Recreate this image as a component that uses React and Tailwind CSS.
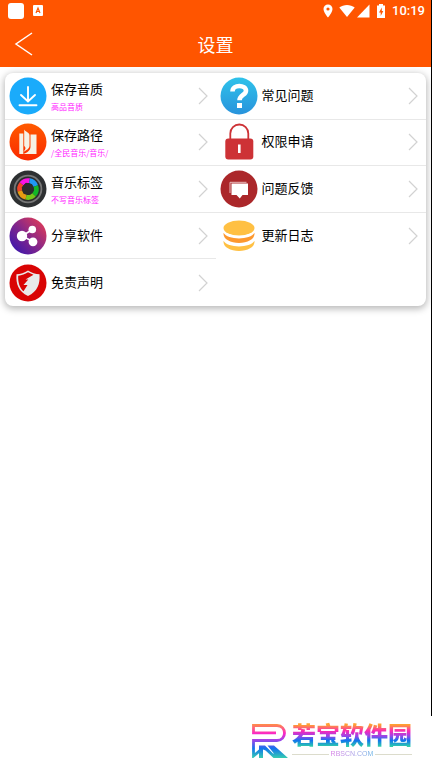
import React from 'react';

const DownloadIcon = () => (
  <svg viewBox="0 0 38 38" className="h-[38px] w-[38px] shrink-0" aria-hidden="true">
    <circle cx="19" cy="19" r="18.5" fill="#1aabfb" />
    <path d="M19 10v14M12 18l7 6.5 7-6.5M10.5 28.2h17" fill="none" stroke="#fff" strokeWidth="1.9" strokeLinecap="round" />
  </svg>
);

const PathIcon = () => (
  <svg viewBox="0 0 38 38" className="h-[38px] w-[38px] shrink-0" aria-hidden="true">
    <defs>
      <linearGradient id="pathFill" x1="0" y1="0" x2="0" y2="1">
        <stop offset="0" stopColor="#ff5a00" />
        <stop offset="1" stopColor="#fa2a00" />
      </linearGradient>
    </defs>
    <circle cx="19" cy="19" r="18.5" fill="url(#pathFill)" />
    <path d="M10.3 10.5h4V31h-4z" fill="#f6f2e6" />
    <path d="M21.5 11.5h6V31H14c5-1.500 7.500-4 7.500-7.500z" fill="#f6f2e6" />
    <path d="M15.200 6.500c1 2.500 5.300 2.500 5.300 6v10c0 3-2.500 4.500-6.200 6.500 2.700-3 2.700-4.500.9-6z" fill="#f6f2e6" />
  </svg>
);

const LensIcon = () => (
  <svg viewBox="0 0 38 38" className="h-[38px] w-[38px] shrink-0" aria-hidden="true">
    <circle cx="19" cy="19" r="18.5" fill="#2e3032" />
    <circle cx="19" cy="19" r="13.4" fill="#2c2c2d" stroke="#777" strokeWidth="1.8" />
    <g fill="none" strokeWidth="4.8">
      <path d="M10.8 21A8.4 8.4 0 0 1 12.5 13.7" stroke="#f0452a" />
      <path d="M12.5 13.7A8.4 8.4 0 0 1 20.5 10.7" stroke="#fb12e4" />
      <path d="M20.5 10.7A8.4 8.4 0 0 1 26.8 16" stroke="#2097f4" />
      <path d="M26.8 16A8.4 8.4 0 0 1 25 24.9" stroke="#12b627" />
      <path d="M25 24.9A8.4 8.4 0 0 1 17 27.2" stroke="#74c51a" />
      <path d="M17 27.2A8.4 8.4 0 0 1 10.8 21" stroke="#e59a12" />
    </g>
    <path d="M17 12.8l6 1.4 2 6-4.500 4.600-6-1.300-1.800-6z" fill="#2c2c2d" />
  </svg>
);

const ShareIcon = () => (
  <svg viewBox="0 0 38 38" className="h-[38px] w-[38px] shrink-0" aria-hidden="true">
    <defs>
      <linearGradient id="shareFill" x1="0.1" y1="0.9" x2="0.9" y2="0.15">
        <stop offset="0" stopColor="#3d17ad" />
        <stop offset="0.5" stopColor="#84268a" />
        <stop offset="1" stopColor="#d83a5c" />
      </linearGradient>
    </defs>
    <circle cx="19" cy="19" r="18.5" fill="url(#shareFill)" />
    <path d="M23.5 12.5L13 19l11 5.5" fill="none" stroke="#fff" strokeWidth="1.6" />
    <circle cx="13" cy="19" r="5.2" fill="#fff" />
    <circle cx="23.3" cy="12.5" r="3.8" fill="#fff" />
    <circle cx="24" cy="24.8" r="4.4" fill="#fff" />
  </svg>
);

const ShieldIcon = () => (
  <svg viewBox="0 0 38 38" className="h-[38px] w-[38px] shrink-0" aria-hidden="true">
    <circle cx="19" cy="19" r="18.5" fill="#d90404" />
    <path d="M19 6.500c3.500 2.300 7.500 3.500 11.500 3.800.8 9.500-2 17.400-11.500 21.700C9.500 27.700 6.700 19.800 7.500 10.300c4-.3 8-1.500 11.500-3.800z" fill="#e9e9e9" />
    <path d="M19 8.300c-3 1.900-6 3-9.800 3.400-.3 6.500 1.300 12 5.300 15.600l4-6.300h-4l4.800-5.500h-2.800l8-4.800z" fill="#d90404" />
  </svg>
);

const QuestionIcon = () => (
  <svg viewBox="0 0 38 38" className="h-[38px] w-[38px] shrink-0" aria-hidden="true">
    <defs>
      <linearGradient id="askFill" x1="0" y1="0" x2="0" y2="1">
        <stop offset="0" stopColor="#2fc2ea" />
        <stop offset="1" stopColor="#2893dc" />
      </linearGradient>
    </defs>
    <circle cx="19" cy="19" r="18.5" fill="url(#askFill)" />
    <path d="M12.5 14.5c0-7.500 13.500-7 13.500-.8 0 4.300-6.500 4.300-6.500 9.500" fill="none" stroke="#fff" strokeWidth="4.600" />
    <path d="M17 26h5v5h-5z" fill="#fff" />
  </svg>
);

const LockIcon = () => (
  <svg viewBox="0 0 38 38" className="h-[38px] w-[38px] shrink-0" aria-hidden="true">
    <path d="M10.3 17v-6.500a9 9 0 0 1 18 0V17" fill="none" stroke="#cd3236" strokeWidth="1.8" />
    <rect x="5.3" y="15.5" width="28" height="21" rx="3" fill="#cd3236" />
    <rect x="18" y="21.5" width="2.6" height="8.5" fill="#fff" />
  </svg>
);

const FeedbackIcon = () => (
  <svg viewBox="0 0 38 38" className="h-[38px] w-[38px] shrink-0" aria-hidden="true">
    <circle cx="19" cy="19" r="18.5" fill="#ab272a" />
    <path d="M10 23V12.3h16.5" fill="none" stroke="#e9bcbc" strokeWidth="1" />
    <path d="M11.5 13.5H28V25h-5.500l-2.700 3.500L16.500 25h-5z" fill="#fff" />
  </svg>
);

const CoinsIcon = () => (
  <svg viewBox="0 0 38 38" className="h-[38px] w-[38px] shrink-0" aria-hidden="true">
    <ellipse cx="19" cy="11" rx="15.5" ry="7.5" fill="#ffc043" />
    <path d="M3.5 15.800c4 7.500 27 7.500 31 0 1.500 13.500-32.500 13.500-31 0z" fill="#fd982e" />
    <path d="M3.5 23.800c4 7.500 27 7.500 31 0 1.500 13.500-32.500 13.500-31 0z" fill="#ffc043" />
  </svg>
);

const Chevron = () => (
  <svg viewBox="0 0 10 18" className="h-[18px] w-[10px] shrink-0" aria-hidden="true">
    <path d="M1 1l8 8-8 8" fill="none" stroke="#d2d2d2" strokeWidth="1.2" />
  </svg>
);

const leftItems = [
  { title: '保存音质', note: '高品音质', Icon: DownloadIcon },
  { title: '保存路径', note: '/全民音乐/音乐/', Icon: PathIcon },
  { title: '音乐标签', note: '不写音乐标签', Icon: LensIcon },
  { title: '分享软件', Icon: ShareIcon },
  { title: '免责声明', Icon: ShieldIcon },
];

const rightItems = [
  { title: '常见问题', Icon: QuestionIcon },
  { title: '权限申请', Icon: LockIcon },
  { title: '问题反馈', Icon: FeedbackIcon },
  { title: '更新日志', Icon: CoinsIcon },
];

const SettingRow = ({ item }) => {
  const { title, note, Icon } = item;
  return (
    <button
      type="button"
      className="flex w-full items-center gap-1 border-b border-[#e8e8e8] pr-2 pl-1 text-left last:border-b-0"
    >
      <Icon />
      {note ? (
        <span className="flex flex-1 flex-col pt-[2px]">
          <span className="text-[13px] leading-[18px] text-black">{title}</span>
          <span className="pt-[2px] text-[8px] leading-[14px] text-[#ff1cff]">{note}</span>
        </span>
      ) : (
        <span className="flex-1 pb-[2px] text-[13px] leading-[18px] text-black">{title}</span>
      )}
      <Chevron />
    </button>
  );
};

const StatusBar = () => (
  <div className="flex h-[21px] items-center justify-between pr-[6px] pl-2 text-white">
    <div className="flex items-center gap-[9px]">
      <span className="h-4 w-4 rounded-[3px] bg-white" />
      <svg viewBox="0 0 10 11" className="h-[11px] w-[10px]" aria-hidden="true">
        <rect width="10" height="11" rx="1" fill="#fff" />
        <path d="M3 8l2-5 2 5M3.7 6.5h2.6" fill="none" stroke="#ff5500" strokeWidth="1.2" />
      </svg>
    </div>
    <div className="flex items-center">
      <svg viewBox="0 0 10 14" className="h-[14px] w-[10px]" aria-hidden="true">
        <path fillRule="evenodd" d="M5 .5a4.500 4.500 0 0 0-4.500 4.500C.5 8.400 5 13.500 5 13.500S9.500 8.400 9.500 5A4.500 4.500 0 0 0 5 .5zm0 6.100a1.600 1.600 0 1 1 0-3.200 1.600 1.600 0 0 1 0 3.200z" fill="#fff" />
      </svg>
      <svg viewBox="0 0 32 14" className="ml-[6px] h-[14px] w-8" aria-hidden="true">
        <path d="M.3 3.500C4.500 0 11.500 0 15.700 3.500L8 13z" fill="#fff" />
        <path d="M30.500.5v13H18z" fill="#fff" />
      </svg>
      <svg viewBox="0 0 10 14" className="ml-[5px] h-[14px] w-[10px]" aria-hidden="true">
        <path d="M3 0h4v1.500h2V14H1V1.500h2z" fill="#fff" />
        <path d="M5.800 3.500L3 8.500h1.700V12l2.600-5H5.800z" fill="#ff5500" />
      </svg>
      <span className="ml-[6px] font-[Roboto] text-[13px] leading-5 font-medium">10:19</span>
    </div>
  </div>
);

const Watermark = () => (
  <footer className="flex h-[50px] items-center justify-end gap-1 pr-5">
    <svg viewBox="0 0 37 34" className="h-[34px] w-[37px]" aria-hidden="true">
      <defs>
        <linearGradient id="brandFill" gradientUnits="userSpaceOnUse" x1="0" y1="0" x2="0" y2="34">
          <stop offset="0" stopColor="#ff8f45" />
          <stop offset="0.28" stopColor="#fb27c6" />
          <stop offset="0.48" stopColor="#9b45e8" />
          <stop offset="0.72" stopColor="#1274ee" />
          <stop offset="1" stopColor="#35cdb0" />
        </linearGradient>
      </defs>
      <path d="M25 8.8H2.500V1.500H26c10 0 10 15 0 15H2.500V32l7-6v-4" fill="none" stroke="url(#brandFill)" strokeWidth="2.8" />
      <path d="M8 21.500h6l8.500 8.500V34l-8-7.500-2.500-1V34H8zM16.500 21.500h6.500L37 34H22.500v-5z" fill="url(#brandFill)" />
    </svg>
    <div className="flex flex-col pb-[2px] font-['Liberation_Sans','Noto_Sans_CJK_SC',sans-serif]">
      <span className="bg-[linear-gradient(180deg,#ffa030_10%,#fb27b6_32%,#9b45e8_50%,#1274ee_66%,#30d0a8_88%)] bg-clip-text text-[24px] leading-7 font-black text-transparent">
        若宝软件园
      </span>
      <span className="flex items-center gap-[2px]">
        <span className="h-px flex-1 bg-[#dcdccc]" />
        <span className="bg-linear-to-r from-[#d77be6] to-[#6ab4e6] bg-clip-text text-[7px] leading-2 text-transparent">RBSCN.COM</span>
        <span className="h-px flex-1 bg-[#dcdccc]" />
      </span>
    </div>
  </footer>
);

const App = () => {
  return (
    <div className="flex min-h-screen flex-col bg-white font-['Noto_Sans_CJK_SC','Liberation_Sans',sans-serif]">
      <div className="flex flex-1 flex-col border-r border-black">
        <header className="bg-[#ff5500] text-white">
          <StatusBar />
          <div className="grid h-[46px] grid-cols-[48px_1fr_48px] items-center">
            <button type="button" aria-label="返回" className="pl-[14px]">
              <svg viewBox="0 0 20 24" className="h-6 w-5" aria-hidden="true">
                <path d="M18 1L2 12l16 11" fill="none" stroke="#fff" strokeWidth="1.5" />
              </svg>
            </button>
            <h1 className="text-center text-[18px] leading-6">设置</h1>
          </div>
        </header>
        <main className="px-[5px] pt-[6px]">
          <div className="grid grid-cols-2 rounded-lg bg-white shadow-[0_2px_7px_1px_rgba(0,0,0,0.28)]">
            <div className="grid h-[233px] grid-rows-5">
              {leftItems.map((item) => (
                <SettingRow key={item.title} item={item} />
              ))}
            </div>
            <div className="grid h-[233px] grid-rows-5">
              {rightItems.map((item) => (
                <SettingRow key={item.title} item={item} />
              ))}
            </div>
          </div>
        </main>
      </div>
      <Watermark />
    </div>
  );
};

export default App;
